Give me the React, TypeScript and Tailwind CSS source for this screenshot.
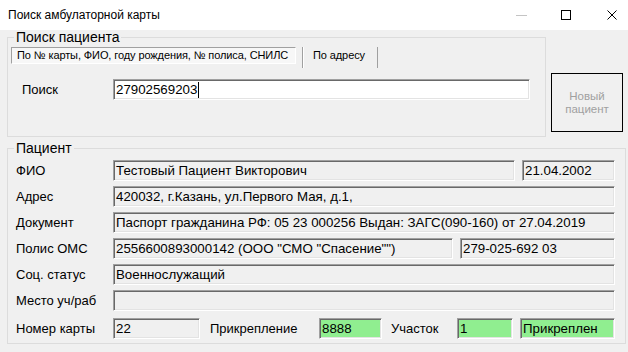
import React from "react";

const sunken =
  "flex items-center h-[21px] pl-[2px] border border-t-[#a0a0a0] border-l-[#a0a0a0] border-b-white border-r-white shadow-[inset_1px_1px_0_#696969,inset_-1px_-1px_0_#e3e3e3] text-[13.3px] whitespace-nowrap overflow-hidden";

function Field({ w, value, green }: { w: string; value?: string; green?: boolean }) {
  return (
    <div className={`${sunken} ${w} ${green ? "bg-[#90ee90]" : "bg-[#f0f0f0]"}`}>
      {value}
    </div>
  );
}

function Row({ label, children, top = "mt-[5px]" }: { label: string; children: React.ReactNode; top?: string }) {
  return (
    <div className={`flex items-center ${top}`}>
      <span className="w-[97px] text-[13px]">{label}</span>
      {children}
    </div>
  );
}

export default function App() {
  return (
    <div className="w-[628px] h-[352px] overflow-hidden bg-[#f0f0f0] text-black font-['Liberation_Sans',Arial,sans-serif]">
      {/* title bar */}
      <div className="h-[30px] bg-white flex items-center pl-[8px] text-[12px]">
        <span className="flex-1">Поиск амбулаторной карты</span>
        <div className="w-[11px] h-px bg-[#c4c4c4]" />
        <div className="ml-[34px] w-[10px] h-[10px] border border-black" />
        <svg className="ml-[36px] mr-[11px]" width="10" height="10" viewBox="0 0 10 10">
          <path d="M0.5 0.5 L9.5 9.5 M9.5 0.5 L0.5 9.5" stroke="#000" strokeWidth="1" />
        </svg>
      </div>

      <div className="pl-[7px]">
        <div className="flex items-start">
          <fieldset className="w-[539px] h-[107px] border border-[#dcdcdc] px-0">
            <legend className="ml-[6px] px-[2px] text-[14px] leading-[14px]">Поиск пациента</legend>
            <div className="flex items-start mt-[3px] ml-[3px] text-[11px] tracking-[-0.1px]">
              <div className="h-[17px] w-[285px] flex items-center pl-[5px] border border-t-[#a0a0a0] border-l-[#a0a0a0] border-b-white border-r-white bg-[#f7f7f7] whitespace-nowrap">
                По № карты, ФИО, году рождения, № полиса, СНИЛС
              </div>
              <div className="ml-[6px] h-[21px] w-px bg-[#a0a0a0] border-r border-white box-content" />
              <div className="h-[17px] flex items-center pl-[9px] w-[73px]">По адресу</div>
              <div className="h-[21px] w-px bg-[#a0a0a0]" />
            </div>
            <div className="flex items-center mt-[11px] pl-[14px]">
              <span className="w-[91px] text-[13px]">Поиск</span>
              <div className={`${sunken} w-[417px] bg-white`}>
                27902569203
                <span className="ml-px w-px h-[16px] bg-black" />
              </div>
            </div>
          </fieldset>
          <div className="ml-[5px] mt-[43px] w-[72px] h-[59px] flex flex-col items-center justify-center bg-[#f0f0f0] border border-black text-[11.5px] leading-[13px] text-[#a0a0a0]">
            <span>Новый</span>
            <span>пациент</span>
          </div>
        </div>

        <fieldset className="mt-[4px] w-[619px] h-[203px] border border-[#dcdcdc] px-0">
          <legend className="ml-[6px] px-[2px] text-[14px] leading-[14px]">Пациент</legend>
          <div className="pl-[8px]">
            <Row label="ФИО">
              <Field w="w-[402px]" value="Тестовый Пациент Викторович" />
              <Field w="ml-[7px] w-[93px]" value="21.04.2002" />
            </Row>
            <Row label="Адрес">
              <Field w="w-[502px]" value="420032, г.Казань, ул.Первого Мая, д.1," />
            </Row>
            <Row label="Документ">
              <Field w="w-[502px]" value="Паспорт гражданина РФ: 05 23 000256 Выдан: ЗАГС(090-160) от 27.04.2019" />
            </Row>
            <Row label="Полис ОМС">
              <Field w="w-[340px]" value='2556600893000142 (ООО "СМО "Спасение"")' />
              <Field w="ml-[7px] w-[155px]" value="279-025-692 03" />
            </Row>
            <Row label="Соц. статус">
              <Field w="w-[502px]" value="Военнослужащий" />
            </Row>
            <Row label="Место уч/раб">
              <Field w="w-[502px]" />
            </Row>
            <Row label="Номер карты" top="mt-[7px]">
              <Field w="w-[87px]" value="22" />
              <span className="ml-[10px] w-[109px] text-[13px]">Прикрепление</span>
              <Field w="w-[63px]" value="8888" green />
              <span className="ml-[9px] w-[66px] text-[13px]">Участок</span>
              <Field w="w-[56px]" value="1" green />
              <Field w="ml-[7px] w-[95px]" value="Прикреплен" green />
            </Row>
          </div>
        </fieldset>
      </div>
    </div>
  );
}
